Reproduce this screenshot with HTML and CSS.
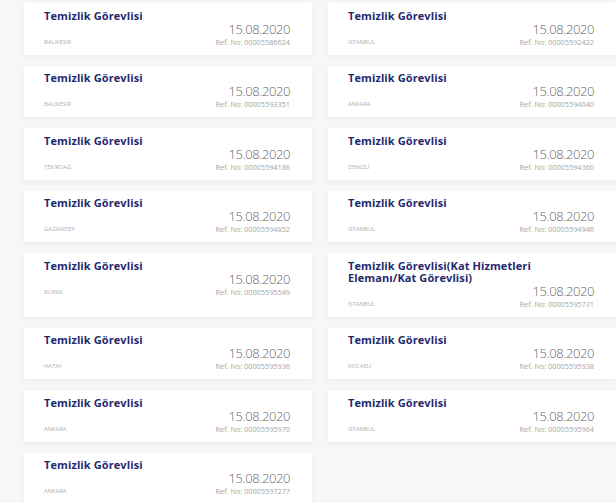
FILE: index.html
```html
<!DOCTYPE html>
<html lang="tr">
<head>
    <meta charset="UTF-8">
    <meta name="viewport" content="width=device-width, initial-scale=1.0">
    <title>İlanlar</title>
    <link rel="stylesheet" href="styles.css">
</head>
<body>
    <div class="job-list">
        <div class="job-card">
            <div class="job-title">Temizlik Görevlisi</div>
            <div class="job-meta">
                <span class="job-city">BALIKESİR</span>
                <div class="job-info"><span class="job-date">15.08.2020</span><span class="job-ref">Ref. No: 00005586624</span></div>
            </div>
        </div>
        <div class="job-card">
            <div class="job-title">Temizlik Görevlisi</div>
            <div class="job-meta">
                <span class="job-city">İSTANBUL</span>
                <div class="job-info"><span class="job-date">15.08.2020</span><span class="job-ref">Ref. No: 00005592422</span></div>
            </div>
        </div>
        <div class="job-card">
            <div class="job-title">Temizlik Görevlisi</div>
            <div class="job-meta">
                <span class="job-city">BALIKESİR</span>
                <div class="job-info"><span class="job-date">15.08.2020</span><span class="job-ref">Ref. No: 00005593351</span></div>
            </div>
        </div>
        <div class="job-card">
            <div class="job-title">Temizlik Görevlisi</div>
            <div class="job-meta">
                <span class="job-city">ANKARA</span>
                <div class="job-info"><span class="job-date">15.08.2020</span><span class="job-ref">Ref. No: 00005594040</span></div>
            </div>
        </div>
        <div class="job-card">
            <div class="job-title">Temizlik Görevlisi</div>
            <div class="job-meta">
                <span class="job-city">TEKİRDAĞ</span>
                <div class="job-info"><span class="job-date">15.08.2020</span><span class="job-ref">Ref. No: 00005594186</span></div>
            </div>
        </div>
        <div class="job-card">
            <div class="job-title">Temizlik Görevlisi</div>
            <div class="job-meta">
                <span class="job-city">DENİZLİ</span>
                <div class="job-info"><span class="job-date">15.08.2020</span><span class="job-ref">Ref. No: 00005594360</span></div>
            </div>
        </div>
        <div class="job-card">
            <div class="job-title">Temizlik Görevlisi</div>
            <div class="job-meta">
                <span class="job-city">GAZİANTEP</span>
                <div class="job-info"><span class="job-date">15.08.2020</span><span class="job-ref">Ref. No: 00005594852</span></div>
            </div>
        </div>
        <div class="job-card">
            <div class="job-title">Temizlik Görevlisi</div>
            <div class="job-meta">
                <span class="job-city">İSTANBUL</span>
                <div class="job-info"><span class="job-date">15.08.2020</span><span class="job-ref">Ref. No: 00005594946</span></div>
            </div>
        </div>
        <div class="job-card">
            <div class="job-title">Temizlik Görevlisi</div>
            <div class="job-meta">
                <span class="job-city">BURSA</span>
                <div class="job-info"><span class="job-date">15.08.2020</span><span class="job-ref">Ref. No: 00005595549</span></div>
            </div>
        </div>
        <div class="job-card">
            <div class="job-title">Temizlik Görevlisi(Kat Hizmetleri Elemanı/Kat Görevlisi)</div>
            <div class="job-meta">
                <span class="job-city">İSTANBUL</span>
                <div class="job-info"><span class="job-date">15.08.2020</span><span class="job-ref">Ref. No: 00005595731</span></div>
            </div>
        </div>
        <div class="job-card">
            <div class="job-title">Temizlik Görevlisi</div>
            <div class="job-meta">
                <span class="job-city">HATAY</span>
                <div class="job-info"><span class="job-date">15.08.2020</span><span class="job-ref">Ref. No: 00005595936</span></div>
            </div>
        </div>
        <div class="job-card">
            <div class="job-title">Temizlik Görevlisi</div>
            <div class="job-meta">
                <span class="job-city">KOCAELİ</span>
                <div class="job-info"><span class="job-date">15.08.2020</span><span class="job-ref">Ref. No: 00005595938</span></div>
            </div>
        </div>
        <div class="job-card">
            <div class="job-title">Temizlik Görevlisi</div>
            <div class="job-meta">
                <span class="job-city">ANKARA</span>
                <div class="job-info"><span class="job-date">15.08.2020</span><span class="job-ref">Ref. No: 00005595970</span></div>
            </div>
        </div>
        <div class="job-card">
            <div class="job-title">Temizlik Görevlisi</div>
            <div class="job-meta">
                <span class="job-city">İSTANBUL</span>
                <div class="job-info"><span class="job-date">15.08.2020</span><span class="job-ref">Ref. No: 00005595964</span></div>
            </div>
        </div>
        <div class="job-card">
            <div class="job-title">Temizlik Görevlisi</div>
            <div class="job-meta">
                <span class="job-city">ANKARA</span>
                <div class="job-info"><span class="job-date">15.08.2020</span><span class="job-ref">Ref. No: 00005597277</span></div>
            </div>
        </div>
    </div>
</body>
</html>
```

FILE: styles.css
```css
body {
    font-family: "Open Sans", sans-serif;
    margin: 0;
    padding: 0;
    background-color: #f7f7f7;
    overflow: hidden;
}
.job-list {
    display: grid;
    grid-template-columns: 288px 288px;
    gap: 11px 16px;
    padding: 3px 0 0 24px;
}
.job-card {
    background-color: white;
    padding: 6.5px 22px 8px 20px;
    box-shadow: 0 2px 6px rgba(0,0,0,0.05);
}
.job-title {
    font-size: 11px;
    line-height: 12px;
    font-weight: 700;
    letter-spacing: 0.1px;
    color: #1f2a6e;
    padding-right: 40px;
}
.job-meta {
    display: flex;
    justify-content: space-between;
    align-items: flex-end;
}
.job-city {
    font-size: 5.8px;
    line-height: 8px;
    color: #b0b0b0;
    margin-bottom: 1px;
}
.job-info {
    display: flex;
    flex-direction: column;
    align-items: flex-end;
}
.job-date {
    font-size: 13px;
    line-height: 14px;
    font-weight: 300;
    letter-spacing: -0.4px;
    color: #666;
}
.job-ref {
    font-size: 7.3px;
    line-height: 9px;
    margin-top: 2px;
    color: #a5a5a5;
}
```
